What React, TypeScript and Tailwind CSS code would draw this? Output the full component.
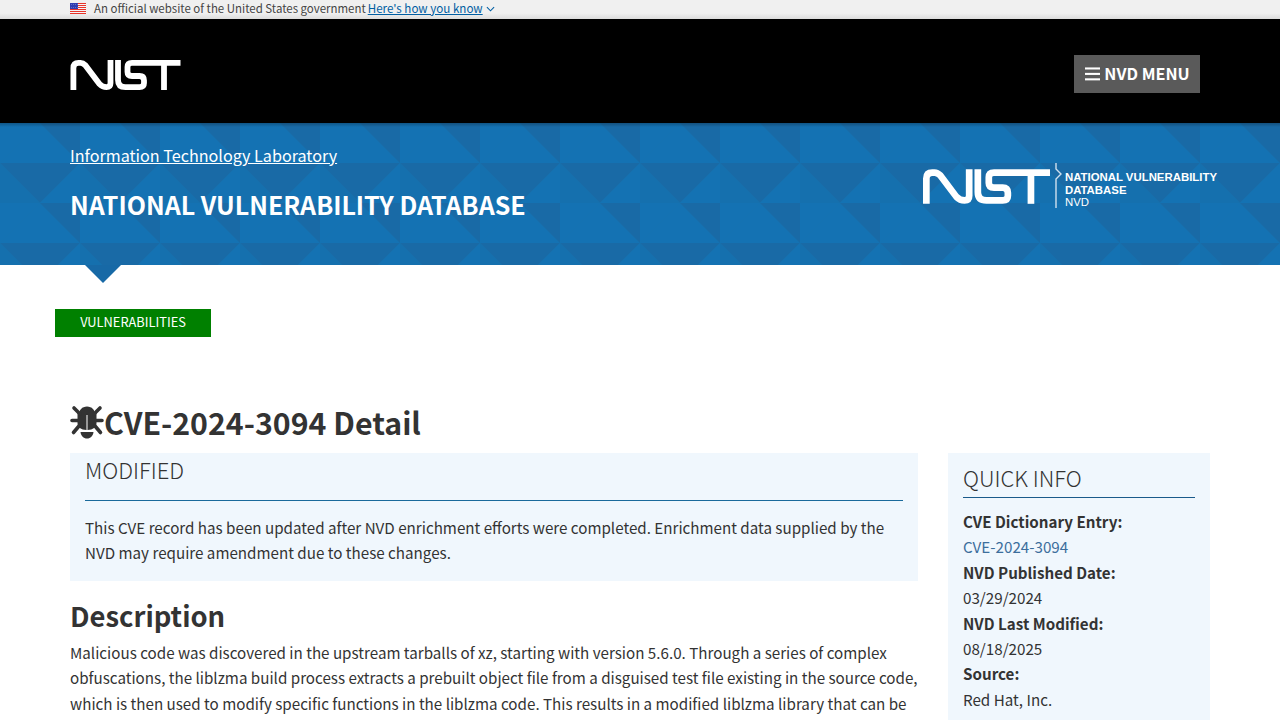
import React from "react";

const FONT = "[font-family:'Noto_Sans_CJK_JP','Noto_Sans',sans-serif]";

function NistLogo({ className }: { className?: string }) {
  return (
    <svg viewBox="0 0 110 30" className={className} fill="none" stroke="#fff" strokeWidth="5.800">
      <path d="M2.900 30V8Q2.900 2.900 8 2.900H10Q12.500 2.900 15 5.400L29 24Q32 27.100 36 27.100Q40 27.100 40 23V0" />
      <path d="M47.500 0V20Q47.500 27.100 55 27.100H69Q73.500 27.100 73.500 23V20.500Q73.500 16 69 16H61.500Q57 16 57 12V7Q57 2.900 61.500 2.900H110" />
      <path d="M93.500 2.900V30" />
    </svg>
  );
}

function Flag() {
  return (
    <svg viewBox="0 0 16 11" className="w-4 h-[11px] shrink-0">
      <rect width="16" height="11" fill="#f5f5f8" />
      {[0, 2, 4, 6, 8, 10].map((y) => (
        <rect key={y} y={y} width="16" height="1" fill="#e8352a" />
      ))}
      <rect width="8" height="6" fill="#2f3cb0" />
      {[1, 3, 5, 7].flatMap((x) => [1.500, 4].map((y) => <rect key={`${x}-${y}`} x={x} y={y} width=".5" height=".5" fill="#fff" />))}
    </svg>
  );
}

function Bug() {
  return (
    <svg viewBox="0 0 34 34" className="w-[34px] h-[34px] shrink-0" fill="#333">
      <path d="M9 10C9 5 12 1.500 17 1.500S25 5 25 10z" />
      <path d="M7.500 8H16.500V25C11 25 7.500 22 7.500 18zM17.500 8H26.500V18C26.500 22 23 25 17.500 25z" />
      <path d="M10.500 27H23.500C23 31 20.500 33.500 17 33.500S11 31 10.500 27z" />
      <path d="M4 3L10 9M30 3L24 9M2 15.500H8M26 15.500H32M9 21L3.500 27.500M25 21L30.500 27.500" fill="none" stroke="#333" strokeWidth="3.600" strokeLinecap="round" />
    </svg>
  );
}

function Pattern() {
  const light = "#1472b3";
  const mid = "#1570ae";
  const dark = "#196aa6";
  return (
    <svg className="absolute inset-0 w-full h-full" aria-hidden="true">
      <defs>
        <pattern id="tri" width="80" height="80" patternUnits="userSpaceOnUse">
          <rect width="80" height="80" fill={mid} />
          <path d="M0 40L40 0L80 40z" fill={light} />
          <path d="M0 40L40 80L80 40z" fill={dark} />
          <path d="M0 0H40L0 40z" fill={light} />
          <path d="M40 0H80V40z" fill={dark} />
          <path d="M0 40V80H40z" fill={mid} />
          <path d="M80 40V80H40z" fill={light} />
        </pattern>
      </defs>
      <rect width="100%" height="100%" fill="url(#tri)" />
    </svg>
  );
}

export default function App() {
  return (
    <div className={`${FONT} h-[720px] overflow-hidden bg-white text-[#333] text-[15.180px] leading-[25.400px]`}>
      <div className="h-[19px] bg-[linear-gradient(180deg,#f0f0f0_70%,#dcdcdc_100%)] px-[70px] pb-[2px] flex items-center text-[11.460px] leading-[17px] text-[#444]">
        <Flag />
        <span className="ml-2">An official website of the United States government</span>
        <a className="ml-[2px] text-[11.600px] text-[#005ea2] underline">Here's how you know </a>
        <svg viewBox="0 0 10 6" className="ml-[3px] w-[9px] h-[6px]" fill="none" stroke="#005ea2" strokeWidth="1.200"><path d="M1 1l4 4 4-4" /></svg>
      </div>
      <header className="h-[104px] bg-black px-[70px] pr-[80px] flex items-start justify-between">
        <NistLogo className="w-[111px] h-[30px] mt-[41px]" />
        <button className="mt-[36px] h-[38px] w-[126px] pl-[1px] bg-[#5a5a5a] text-white flex items-center justify-center gap-[4px] font-bold text-[16.200px]">
          <svg viewBox="0 0 16 14" className="w-[15px] h-[14px]" fill="#fff"><rect y="0" width="16" height="2.200" /><rect y="5.800" width="16" height="2.200" /><rect y="11.600" width="16" height="2.200" /></svg>
          NVD MENU
        </button>
      </header>
      <section className="relative h-[142px] bg-[#1369a8] px-[70px] flex justify-between overflow-hidden">
        <Pattern />
        <div className="absolute inset-x-0 top-0 h-[4px] bg-[linear-gradient(180deg,rgba(0,0,0,0.25),rgba(0,0,0,0))]" />
        <div className="relative pt-[19px] text-white">
          <a className="block text-[16.150px] leading-[26px] underline">Information Technology Laboratory</a>
          <h1 className="mt-[16px] text-[25px] leading-[40px] font-bold">NATIONAL VULNERABILITY DATABASE</h1>
        </div>
        <div className="relative flex items-start pt-[40px] mr-[-7px]">
          <NistLogo className="w-[127px] h-[35px] mt-[6px]" />
          <svg viewBox="0 0 8 46" className="w-2 h-[46px] ml-[5px]" fill="none" stroke="#cfe0ee" strokeWidth="1.400"><path d="M1 0v6l5 5-5 5v29" /></svg>
          <div className="ml-[2px] mt-[8px] [font-family:'Liberation_Sans',sans-serif] text-[11.400px] leading-[12.500px] text-white">
            <div className="font-bold">NATIONAL VULNERABILITY</div>
            <div className="font-bold">DATABASE</div>
            <div>NVD</div>
          </div>
        </div>
      </section>
      <div className="ml-[85px] w-0 h-0 border-l-[18px] border-r-[18px] border-t-[18px] border-l-transparent border-r-transparent border-t-[#1769a6]" />
      <nav className="mt-[26px] ml-[55px] w-[156px] h-[28px] bg-[#008000] text-white text-[12.830px] leading-[25px] text-center">VULNERABILITIES</nav>
      <main className="px-[70px] mt-[62px]">
        <h2 className="flex items-center h-[46px] text-[30.300px] leading-[46px] font-bold">
          <Bug />
          CVE-2024-3094 Detail
        </h2>
        <div className="mt-[8px] flex items-start">
          <div className="w-[848px]">
            <div className="h-[128px] bg-[#f0f7fd] px-[15px]">
              <h3 className="text-[22px] leading-[33px] h-[47px] border-b border-[#1a6a9b] box-content font-light">MODIFIED</h3>
              <p className="mt-[14px]">This CVE record has been updated after NVD enrichment efforts were completed. Enrichment data supplied by the NVD may require amendment due to these changes.</p>
            </div>
            <h3 className="mt-[14px] text-[27.400px] leading-[40px] font-bold">Description</h3>
            <p className="mt-[5px]">Malicious code was discovered in the upstream tarballs of xz, starting with version 5.6.0. Through a series of complex obfuscations, the liblzma build process extracts a prebuilt object file from a disguised test file existing in the source code, which is then used to modify specific functions in the liblzma code. This results in a modified liblzma library that can be used by any software linked against this library, intercepting and modifying the data interaction with this library.</p>
          </div>
          <aside className="ml-[30px] w-[262px] h-[300px] bg-[#f0f7fd] px-[15px] pt-[6px]">
            <h3 className="text-[22px] leading-[36px] pb-[2px] border-b border-[#1a5a8a] font-light">QUICK INFO</h3>
            <dl className="mt-[11px]">
              <dt className="font-bold">CVE Dictionary Entry:</dt>
              <dd className="text-[#3c6e9c]">CVE-2024-3094</dd>
              <dt className="font-bold">NVD Published Date:</dt>
              <dd>03/29/2024</dd>
              <dt className="font-bold">NVD Last Modified:</dt>
              <dd>08/18/2025</dd>
              <dt className="font-bold">Source:</dt>
              <dd>Red Hat, Inc.</dd>
            </dl>
          </aside>
        </div>
      </main>
    </div>
  );
}
